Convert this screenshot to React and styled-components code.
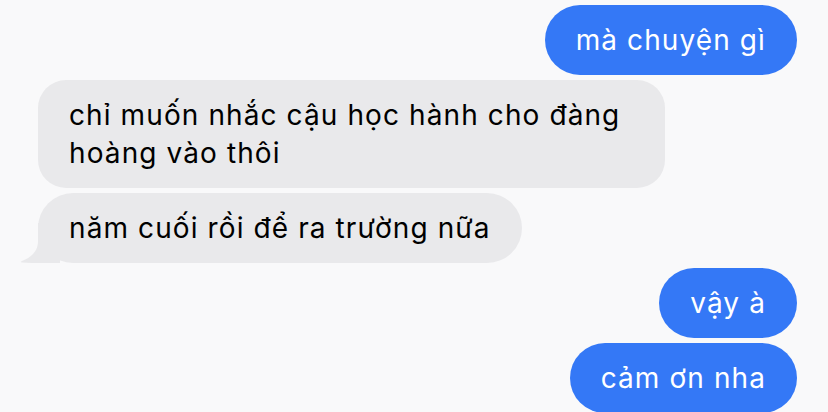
import React from "react";
import styled, { createGlobalStyle } from "styled-components";

const GlobalStyle = createGlobalStyle`
  html, body {
    margin: 0;
    padding: 0;
    background: #f9f9fa;
    overflow: hidden;
  }
  body {
    font-family: "Inter", "Noto Sans", "Liberation Sans", sans-serif;
    -webkit-font-smoothing: antialiased;
  }
`;

const messages = [
  { id: 0, mine: false, text: "", ghostWidth: 346 },
  { id: 1, mine: true, text: "mà chuyện gì" },
  { id: 2, mine: false, text: "chỉ muốn nhắc cậu học hành cho đàng hoàng vào thôi" },
  { id: 3, mine: false, text: "năm cuối rồi để ra trường nữa", tail: true },
  { id: 4, mine: true, text: "vậy à" },
  { id: 5, mine: true, text: "cảm ơn nha" },
];

export default function App() {
  return (
    <>
      <GlobalStyle />
      <Screen>
        <Thread>
          {messages.map((m) => (
            <Row key={m.id} $mine={m.mine}>
              <Bubble
                $mine={m.mine}
                $tail={m.tail}
                style={m.ghostWidth ? { width: m.ghostWidth } : undefined}
              >
                {m.text}
                {m.tail && (
                  <Tail viewBox="0 0 40 40" aria-hidden="true">
                    <path d="M18 0 H40 V40 H24 C16 40 8 40 2 39.5 C0.4 39.3 0.4 38.5 2 38 C12 34 18 28 18 18 Z" />
                  </Tail>
                )}
              </Bubble>
            </Row>
          ))}
        </Thread>
      </Screen>
    </>
  );
}

const Screen = styled.div`
  width: 828px;
  height: 412px;
  overflow: hidden;
  background: #f9f9fa;
`;

const Thread = styled.div`
  display: flex;
  flex-direction: column;
  gap: 5px;
  margin-top: -70px;
  padding: 0 31px 0 38px;
`;

const Row = styled.div`
  display: flex;
  justify-content: ${(p) => (p.$mine ? "flex-end" : "flex-start")};
`;

const Bubble = styled.div`
  position: relative;
  box-sizing: border-box;
  min-height: 70px;
  max-width: 627px;
  padding: 16px 31px;
  border-radius: ${(p) => (p.$mine || p.$tail ? "35px" : "28px")};
  background: ${(p) => (p.$mine ? "#3478f6" : "#e9e9eb")};
  color: ${(p) => (p.$mine ? "#ffffff" : "#000000")};
  font-size: 28px;
  line-height: 38px;
  letter-spacing: 1.1px;
`;

const Tail = styled.svg`
  position: absolute;
  left: -18px;
  bottom: 0;
  width: 40px;
  height: 40px;
  fill: #e9e9eb;
`;
